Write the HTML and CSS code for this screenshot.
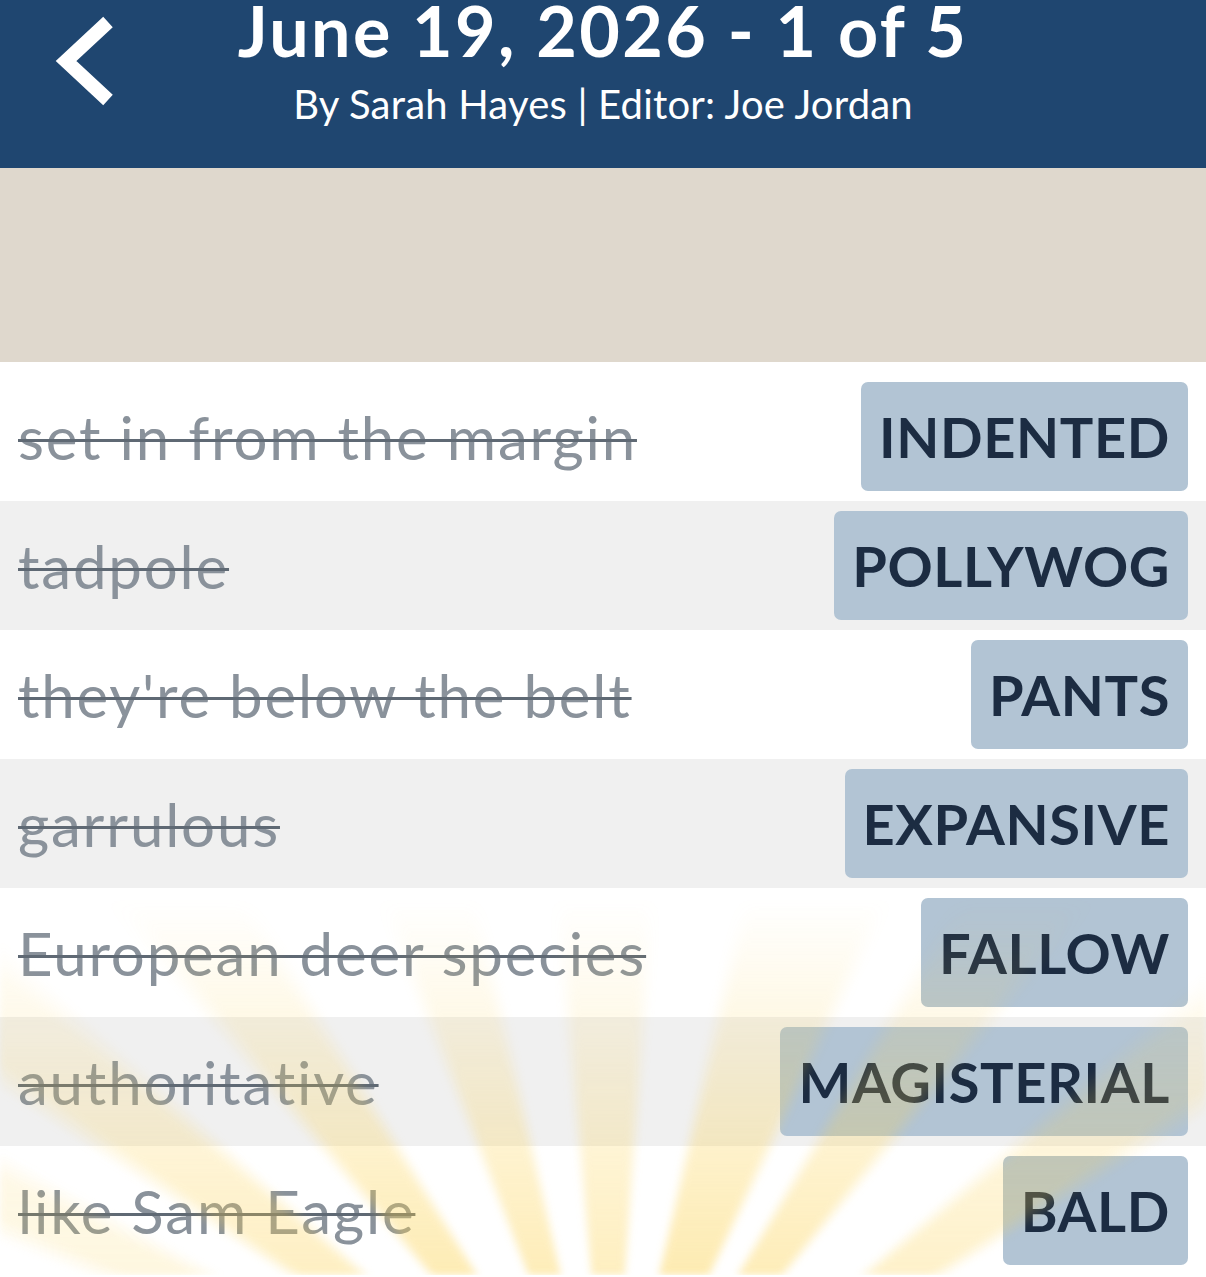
FILE: index.html
```html
<!DOCTYPE html>
<html lang="en">
<head>
    <meta charset="UTF-8">
    <meta name="viewport" content="width=device-width, initial-scale=1.0">
    <title>Puzzle review</title>
    <link rel="stylesheet" href="styles.css">
</head>
<body>
    <header class="top-bar">
        <a class="back" href="#" aria-label="Back">
            <svg width="66" height="110" viewBox="0 0 66 110">
                <polyline points="54,22 12,61 54,100" fill="none" stroke="#fff" stroke-width="14"></polyline>
            </svg>
        </a>
        <div class="heading">
            <h1 class="title">June 19, 2026 - 1 of 5</h1>
            <p class="byline">By Sarah Hayes | Editor: Joe Jordan</p>
        </div>
    </header>

    <div class="banner"></div>

    <main class="clues">
        <div class="clue-row">
            <span class="clue">set in from the margin</span>
            <span class="answer">INDENTED</span>
        </div>
        <div class="clue-row">
            <span class="clue">tadpole</span>
            <span class="answer">POLLYWOG</span>
        </div>
        <div class="clue-row">
            <span class="clue">they're below the belt</span>
            <span class="answer">PANTS</span>
        </div>
        <div class="clue-row">
            <span class="clue">garrulous</span>
            <span class="answer">EXPANSIVE</span>
        </div>
        <div class="clue-row">
            <span class="clue">European deer species</span>
            <span class="answer">FALLOW</span>
        </div>
        <div class="clue-row">
            <span class="clue">authoritative</span>
            <span class="answer">MAGISTERIAL</span>
        </div>
        <div class="clue-row">
            <span class="clue">like Sam Eagle</span>
            <span class="answer">BALD</span>
        </div>
        <!-- sunburst glow sitting over the bottom rows -->
        <div class="rays"></div>
    </main>
</body>
</html>
```

FILE: styles.css
```css
body {
    margin: 0;
    padding: 0;
    font-family: Lato, "Open Sans", sans-serif;
    background-color: #fff;
    overflow: hidden;
}
.top-bar {
    display: grid;
    grid-template-columns: 1fr auto 1fr;
    height: 168px;
    background-color: #1f4670;
    color: white;
}
.back {
    display: block;
    padding-left: 54px;
}
.back svg {
    display: block;
}
.heading {
    text-align: center;
}
.title {
    margin: 0;
    font-size: 70px;
    line-height: 60px;
    font-weight: 700;
    letter-spacing: 2.4px;
}
.byline {
    margin: 20px 0 0;
    font-size: 40px;
    line-height: 48px;
    font-weight: 400;
    letter-spacing: 0.2px;
}
.banner {
    height: 194px;
    background-color: #dfd8cd;
}
.clues {
    position: relative;
    padding-top: 10px;
}
.clue-row {
    display: flex;
    justify-content: space-between;
    align-items: center;
    height: 129px;
    padding: 0 18px;
}
.clue-row:nth-child(even) {
    background-color: #f0f0f0;
}
.clue {
    font-size: 60px;
    letter-spacing: 1.8px;
    color: #8a929b;
    text-decoration: line-through;
    text-decoration-color: #5f6974;
    text-decoration-thickness: 3px;
}
.answer {
    display: flex;
    align-items: center;
    height: 109px;
    padding: 0 18px;
    border-radius: 7px;
    background-color: #b2c4d4;
    color: #1c2c42;
    font-size: 56px;
    font-weight: 700;
    letter-spacing: 0.6px;
}
.rays {
    position: absolute;
    left: 0;
    right: 0;
    bottom: 0;
    height: 397px;
    pointer-events: none;
    filter: blur(3px);
    background: conic-gradient(from -70deg at 610px 610px,
        transparent 2deg, rgba(252, 210, 80, 0.18) 4deg 7deg, transparent 9deg,
        transparent 13deg, rgba(252, 210, 80, 0.34) 15deg 20deg, transparent 22deg,
        transparent 29deg, rgba(252, 210, 80, 0.42) 31deg 37deg, transparent 39deg,
        transparent 48deg, rgba(252, 210, 80, 0.4) 50deg 56deg, transparent 58deg,
        transparent 64deg, rgba(252, 210, 80, 0.36) 66deg 73deg, transparent 75deg,
        transparent 82deg, rgba(252, 210, 80, 0.44) 84deg 94deg, transparent 96deg,
        transparent 100deg, rgba(252, 210, 80, 0.4) 102deg 108deg, transparent 110deg,
        transparent 119deg, rgba(252, 210, 80, 0.3) 121deg 126deg, transparent 128deg);
    -webkit-mask-image: linear-gradient(to top, #000 0%, rgba(0, 0, 0, 0.55) 45%, transparent 95%);
    mask-image: linear-gradient(to top, #000 0%, rgba(0, 0, 0, 0.55) 45%, transparent 95%);
}
```
